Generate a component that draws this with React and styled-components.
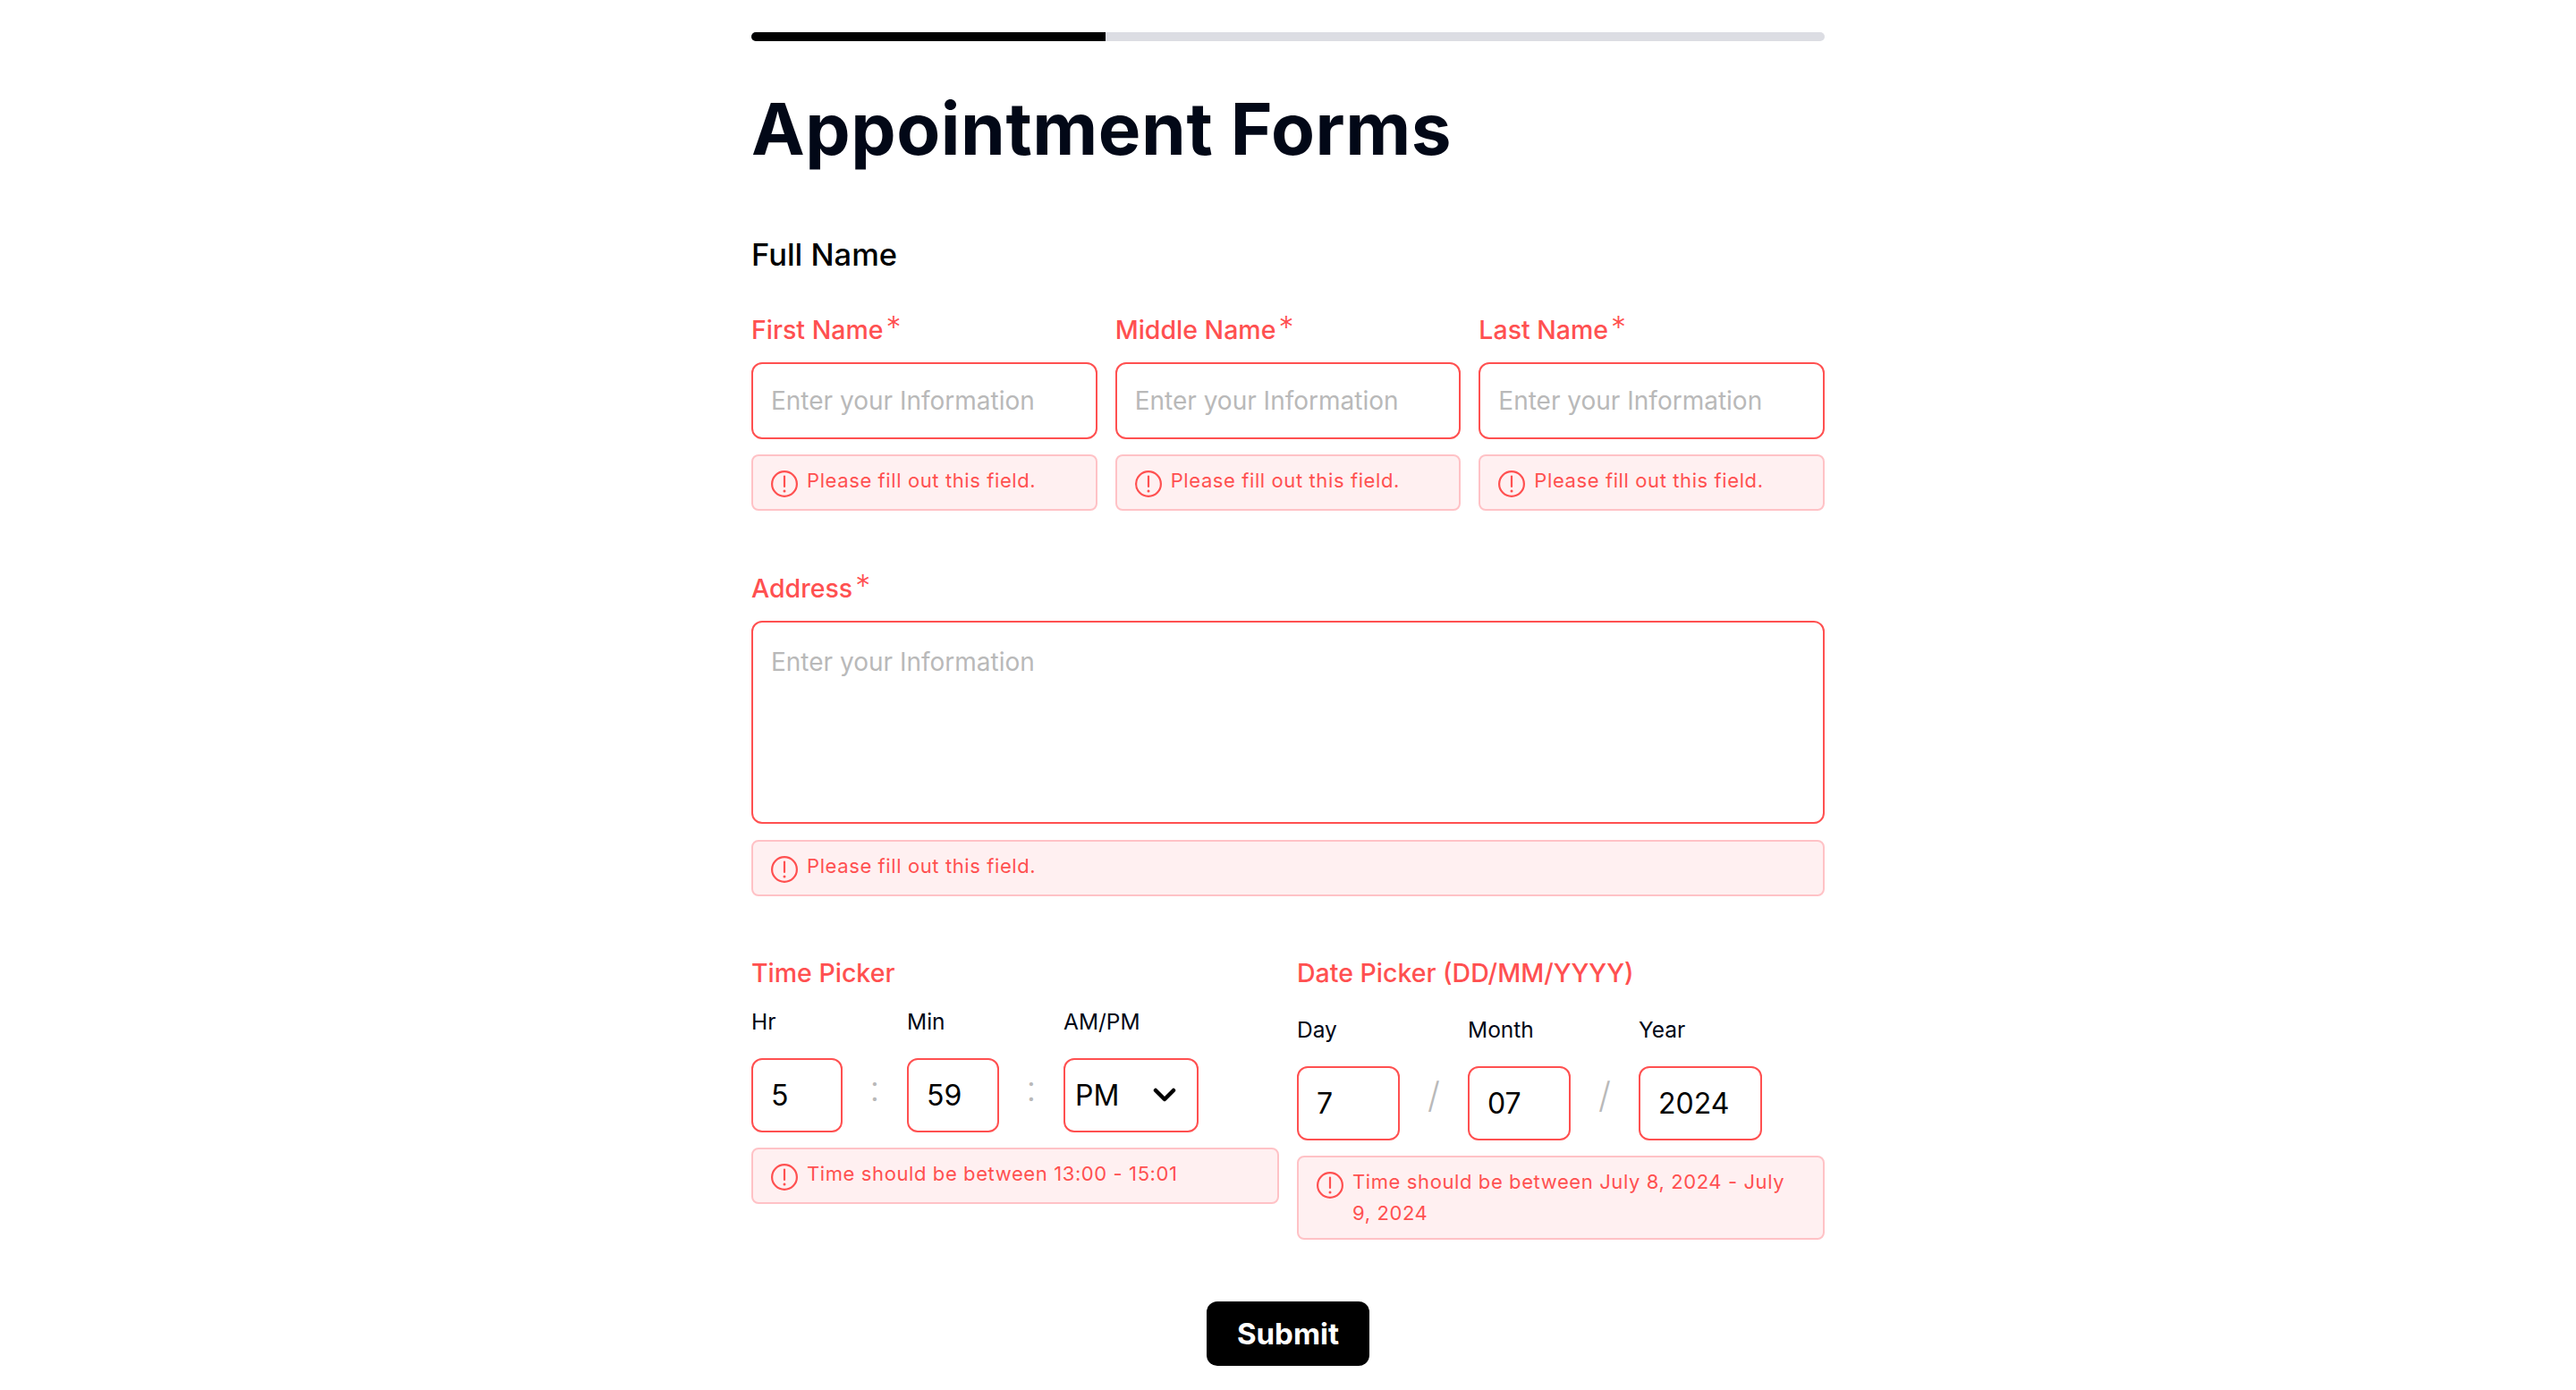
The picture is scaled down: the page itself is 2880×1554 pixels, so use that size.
import React from "react";
import styled, { createGlobalStyle } from "styled-components";

const COLORS = {
  ink: "#020817",
  red: "#ff5050",
  errorBg: "#fff0f1",
  errorBorder: "#ffc2c6",
  placeholder: "#b9b9b9",
  track: "#dcdde3",
};

const GlobalStyle = createGlobalStyle`
  html, body {
    margin: 0;
    padding: 0;
    background: #fff;
    font-family: Inter, "Liberation Sans", sans-serif;
    color: ${COLORS.ink};
  }
  * {
    box-sizing: border-box;
  }
`;

const Page = styled.main`
  width: 1200px;
  margin: 0 auto;
  padding: 36px 0 27px;
`;

const Progress = styled.div`
  height: 10px;
  border-radius: 5px;
  background: ${COLORS.track};
  overflow: hidden;
`;

const ProgressFill = styled.div`
  height: 100%;
  background: #000;
`;

const Title = styled.h1`
  margin: 50px 0 0;
  font-size: 80px;
  line-height: 96px;
  font-weight: 700;
  letter-spacing: 0.55px;
`;

const SectionTitle = styled.h2`
  margin: 71px 0 0;
  font-size: 34.5px;
  line-height: 44px;
  font-weight: 450;
  color: #000;
`;

const NameRow = styled.div`
  display: grid;
  grid-template-columns: repeat(3, 1fr);
  gap: 20px;
  margin-top: 42px;
`;

const Field = styled.div`
  margin-top: ${(p) => p.$top || 0}px;
`;

const Label = styled.label`
  display: block;
  font-size: 28.5px;
  line-height: 40px;
  font-weight: 450;
  color: ${COLORS.red};
`;

const Star = styled.span`
  margin-left: 3px;
  font-size: 34px;
  font-weight: 300;
  line-height: 0;
  vertical-align: 1px;
`;

const TextInput = styled.input`
  display: block;
  width: 100%;
  height: 86px;
  margin-top: 16px;
  padding: 0 20px;
  border: 2px solid ${COLORS.red};
  border-radius: 12px;
  background: #fff;
  outline: none;
  font-family: inherit;
  font-size: 28px;
  color: #000;
  &::placeholder {
    color: ${COLORS.placeholder};
    opacity: 1;
  }
`;

const TextArea = styled.textarea`
  display: block;
  width: 100%;
  height: 227px;
  margin-top: 16px;
  padding: 26px 20px;
  border: 2px solid ${COLORS.red};
  border-radius: 12px;
  background: #fff;
  outline: none;
  resize: none;
  font-family: inherit;
  font-size: 28px;
  line-height: 36px;
  &::placeholder {
    color: ${COLORS.placeholder};
    opacity: 1;
  }
`;

const ErrorBox = styled.div`
  display: flex;
  align-items: flex-start;
  gap: 10px;
  min-height: 63px;
  margin-top: ${(p) => p.$top || 17}px;
  padding: 10px 20px 10px;
  border: 2px solid ${COLORS.errorBorder};
  border-radius: 8px;
  background: ${COLORS.errorBg};
  font-size: 22px;
  line-height: 35px;
  letter-spacing: 0.6px;
  color: ${COLORS.red};
`;

const ErrorIconWrap = styled.svg`
  flex: none;
  width: 30px;
  height: 30px;
  margin-top: 6px;
`;

const PickerRow = styled.div`
  display: grid;
  grid-template-columns: repeat(2, 1fr);
  gap: 20px;
  margin-top: 66px;
`;

const PickerTitle = styled.div`
  font-size: 28.5px;
  line-height: 40px;
  font-weight: 450;
  color: ${COLORS.red};
`;

const Parts = styled.div`
  display: flex;
  margin-top: ${(p) => p.$top}px;
`;

const Part = styled.div`
  flex: none;
  width: ${(p) => p.$width}px;
`;

const PartLabel = styled.div`
  font-size: 24.5px;
  line-height: 32px;
  color: ${COLORS.ink};
`;

const PartInput = styled.input`
  display: block;
  width: 100%;
  height: 83px;
  margin-top: 25px;
  padding: 0 20px;
  border: 2px solid ${COLORS.red};
  border-radius: 12px;
  outline: none;
  font-family: inherit;
  font-size: 32px;
  color: #000;
`;

const Separator = styled.div`
  flex: none;
  width: ${(p) => p.$width}px;
  padding-top: ${(p) => p.$top}px;
  text-align: center;
  font-size: 40px;
  font-weight: 300;
  line-height: 48px;
  color: ${COLORS.placeholder};
`;

const SelectWrap = styled.div`
  position: relative;
  margin-top: 25px;
`;

const Select = styled.select`
  display: block;
  width: 100%;
  height: 83px;
  padding: 0 11px;
  border: 2px solid ${COLORS.red};
  border-radius: 12px;
  outline: none;
  appearance: none;
  background: #fff;
  font-family: inherit;
  font-size: 32px;
  color: #000;
`;

const Chevron = styled.svg`
  position: absolute;
  top: 32px;
  right: 25px;
  width: 26px;
  height: 18px;
  pointer-events: none;
`;

const SubmitRow = styled.div`
  display: flex;
  justify-content: center;
  margin-top: 69px;
`;

const Submit = styled.button`
  width: 182px;
  height: 72px;
  border: 0;
  border-radius: 12px;
  background: #000;
  font-family: inherit;
  font-size: 33px;
  font-weight: 700;
  color: #fff;
`;

const ErrorIcon = () => (
  <ErrorIconWrap viewBox="0 0 30 30" fill="none" stroke={COLORS.red} strokeWidth="2.2">
    <circle cx="15" cy="15" r="13.9" />
    <path d="M15 6.5v11.5" strokeLinecap="round" />
    <circle cx="15" cy="23" r="1.5" fill={COLORS.red} stroke="none" />
  </ErrorIconWrap>
);

const Error = ({ children, top }) => (
  <ErrorBox $top={top}>
    <ErrorIcon />
    <span>{children}</span>
  </ErrorBox>
);

const RequiredLabel = ({ children }) => (
  <Label>
    {children}
    <Star>*</Star>
  </Label>
);

const NameField = ({ label }) => (
  <Field>
    <RequiredLabel>{label}</RequiredLabel>
    <TextInput placeholder="Enter your Information" />
    <Error>Please fill out this field.</Error>
  </Field>
);

const App = () => {
  return (
    <Page>
      <GlobalStyle />
      <Progress>
        <ProgressFill style={{ width: "33%" }} />
      </Progress>
      <Title>Appointment Forms</Title>
      <SectionTitle>Full Name</SectionTitle>
      <NameRow>
        <NameField label="First Name" />
        <NameField label="Middle Name" />
        <NameField label="Last Name" />
      </NameRow>
      <Field $top={67}>
        <RequiredLabel>Address</RequiredLabel>
        <TextArea placeholder="Enter your Information" />
        <Error top={18}>Please fill out this field.</Error>
      </Field>
      <PickerRow>
        <div>
          <PickerTitle>Time Picker</PickerTitle>
          <Parts $top={18}>
            <Part $width={102}>
              <PartLabel>Hr</PartLabel>
              <PartInput defaultValue="5" />
            </Part>
            <Separator $width={72} $top={67}>:</Separator>
            <Part $width={103}>
              <PartLabel>Min</PartLabel>
              <PartInput defaultValue="59" />
            </Part>
            <Separator $width={72} $top={67}>:</Separator>
            <Part $width={151}>
              <PartLabel>AM/PM</PartLabel>
              <SelectWrap>
                <Select defaultValue="PM">
                  <option>AM</option>
                  <option>PM</option>
                </Select>
                <Chevron viewBox="0 0 26 18" fill="none" stroke="#000" strokeWidth="4.5" strokeLinecap="round" strokeLinejoin="round">
                  <path d="M3 4l10 10L23 4" />
                </Chevron>
              </SelectWrap>
            </Part>
          </Parts>
          <Error>Time should be between 13:00 - 15:01</Error>
        </div>
        <div>
          <PickerTitle>Date Picker (DD/MM/YYYY)</PickerTitle>
          <Parts $top={27}>
            <Part $width={115}>
              <PartLabel>Day</PartLabel>
              <PartInput defaultValue="7" />
            </Part>
            <Separator $width={76} $top={66}>/</Separator>
            <Part $width={115}>
              <PartLabel>Month</PartLabel>
              <PartInput defaultValue="07" />
            </Part>
            <Separator $width={76} $top={66}>/</Separator>
            <Part $width={138}>
              <PartLabel>Year</PartLabel>
              <PartInput defaultValue="2024" />
            </Part>
          </Parts>
          <Error>Time should be between July 8, 2024 - July 9, 2024</Error>
        </div>
      </PickerRow>
      <SubmitRow>
        <Submit>Submit</Submit>
      </SubmitRow>
    </Page>
  );
};

export default App;
